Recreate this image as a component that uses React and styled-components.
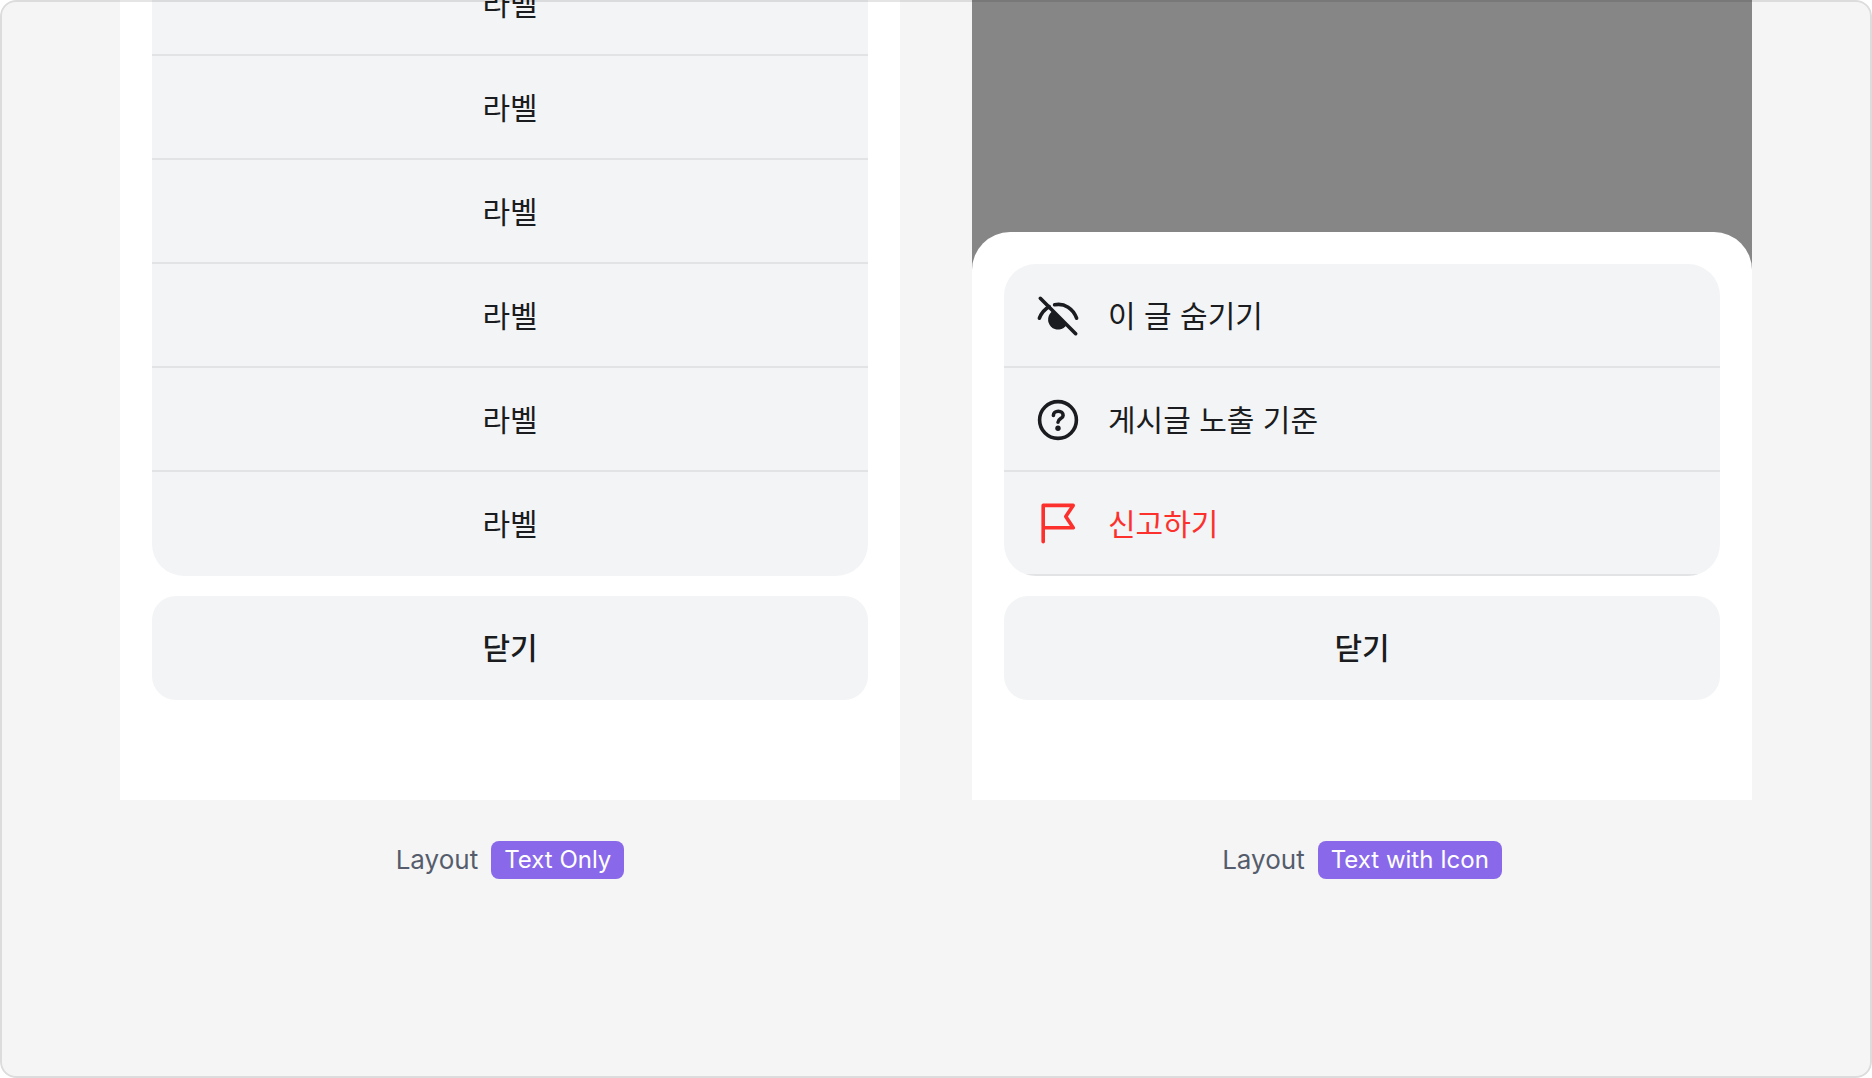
import styled, { createGlobalStyle } from "styled-components";

// Icons
const EyeSlashIcon = () => (
    <Icon viewBox="0 0 44 44" aria-hidden="true">
        <path d="M4.3 4.3L39.7 39.7" />
        <path d="M3.4 24.2C5.2 19.4 8.6 15.2 13.2 12.6" />
        <path d="M18.6 10.8C28.6 8.8 37.2 14.6 40.6 24.2" />
        <path className="solid" d="M17 17A10 10 0 1 0 30.7 30.7Z" />
    </Icon>
);

const QuestionIcon = () => (
    <Icon viewBox="0 0 44 44" aria-hidden="true">
        <circle cx="22" cy="22" r="18.4" />
        <path d="M17.4 17.4C17.4 14.8 19.5 13.2 22.3 13.2C25.1 13.2 27.1 15 27.1 17.4C27.1 20.6 22 20.6 22 24.2" />
        <circle className="solid" cx="22" cy="30.3" r="2.7" />
    </Icon>
);

const FlagIcon = () => (
    <Icon viewBox="0 0 44 44" aria-hidden="true">
        <path d="M7.2 39.8V3.4H37.2L29.8 14.5L37.2 25.8H7.2" />
    </Icon>
);

const labels = ["라벨", "라벨", "라벨", "라벨", "라벨", "라벨"];

const postActions = [
    { text: "이 글 숨기기", icon: <EyeSlashIcon /> },
    { text: "게시글 노출 기준", icon: <QuestionIcon /> },
    { text: "신고하기", icon: <FlagIcon />, critical: true },
];

const App = () => {
    return (
        <>
            <GlobalStyle />
            <Canvas>
                <Example>
                    <Screen>
                        <Sheet>
                            <Group>
                                {labels.map((label, i) => (
                                    <li key={i}>
                                        <Action $divider={i < labels.length - 1}>{label}</Action>
                                    </li>
                                ))}
                            </Group>
                            <CloseButton>닫기</CloseButton>
                        </Sheet>
                    </Screen>
                    <Caption>
                        Layout <Badge>Text Only</Badge>
                    </Caption>
                </Example>
                <Example>
                    <Screen>
                        <Sheet>
                            <Group>
                                {postActions.map((action) => (
                                    <li key={action.text}>
                                        <Action $divider $withIcon $critical={action.critical}>
                                            {action.icon}
                                            {action.text}
                                        </Action>
                                    </li>
                                ))}
                            </Group>
                            <CloseButton>닫기</CloseButton>
                        </Sheet>
                    </Screen>
                    <Caption>
                        Layout <Badge>Text with Icon</Badge>
                    </Caption>
                </Example>
            </Canvas>
        </>
    );
};

const GlobalStyle = createGlobalStyle`
    *{
        box-sizing: border-box;
        margin: 0;
        padding: 0;
    }
    body{
        background: white;
        font-family: Inter, "Noto Sans CJK KR", sans-serif;
    }
    button{
        border: none;
        font-family: inherit;
        cursor: pointer;
    }
`;

const Canvas = styled.main`
    position: relative;
    display: grid;
    grid-template-columns: 1fr 1fr;
    gap: 72px;
    min-height: 100vh;
    padding: 0 120px;
    background: #f5f5f5;
    border-radius: 16px;
    overflow: hidden;
    /* outline sits over the screens */
    &::after{
        content: "";
        position: absolute;
        inset: 0;
        border: 2px solid rgba(0, 0, 0, 0.1);
        border-radius: 16px;
        pointer-events: none;
    }
`;

const Example = styled.section`
    display: flex;
    flex-direction: column;
    gap: 40px;
`;

const Screen = styled.div`
    display: flex;
    flex-direction: column;
    justify-content: flex-end;
    height: 800px;
    background: #868686;
    overflow: hidden;
`;

const Sheet = styled.div`
    display: flex;
    flex-direction: column;
    gap: 20px;
    padding: 32px 32px 100px;
    background: white;
    border-radius: 38px 38px 0 0;
`;

const Group = styled.ul`
    list-style: none;
    border-radius: 32px;
    background: #f3f4f6;
    overflow: hidden;
`;

const Action = styled.button`
    display: flex;
    align-items: center;
    justify-content: ${({ $withIcon }) => ($withIcon ? "flex-start" : "center")};
    gap: 28px;
    width: 100%;
    height: 104px;
    padding: 0 32px;
    background: transparent;
    box-shadow: ${({ $divider }) => ($divider ? "inset 0 -2px #e2e3e5" : "none")};
    color: ${({ $critical }) => ($critical ? "#fc312d" : "#1a1c20")};
    font-size: 30px;
    line-height: 40px;
`;

const CloseButton = styled.button`
    height: 104px;
    border-radius: 24px;
    background: #f3f4f6;
    color: #1a1c20;
    font-size: 30px;
    font-weight: 500;
    line-height: 40px;
`;

const Caption = styled.p`
    display: flex;
    align-items: center;
    justify-content: center;
    gap: 13px;
    color: #555d6d;
    font-size: 26px;
    line-height: 40px;
`;

const Badge = styled.span`
    padding: 0 13px;
    border-radius: 8px;
    background: #8969ea;
    color: white;
    font-size: 24px;
    line-height: 38px;
`;

const Icon = styled.svg`
    flex: none;
    width: 44px;
    height: 44px;
    fill: none;
    stroke: currentColor;
    stroke-width: 3.6;
    stroke-linecap: round;
    stroke-linejoin: round;
    .solid{
        fill: currentColor;
        stroke: none;
    }
`;

export default App;
